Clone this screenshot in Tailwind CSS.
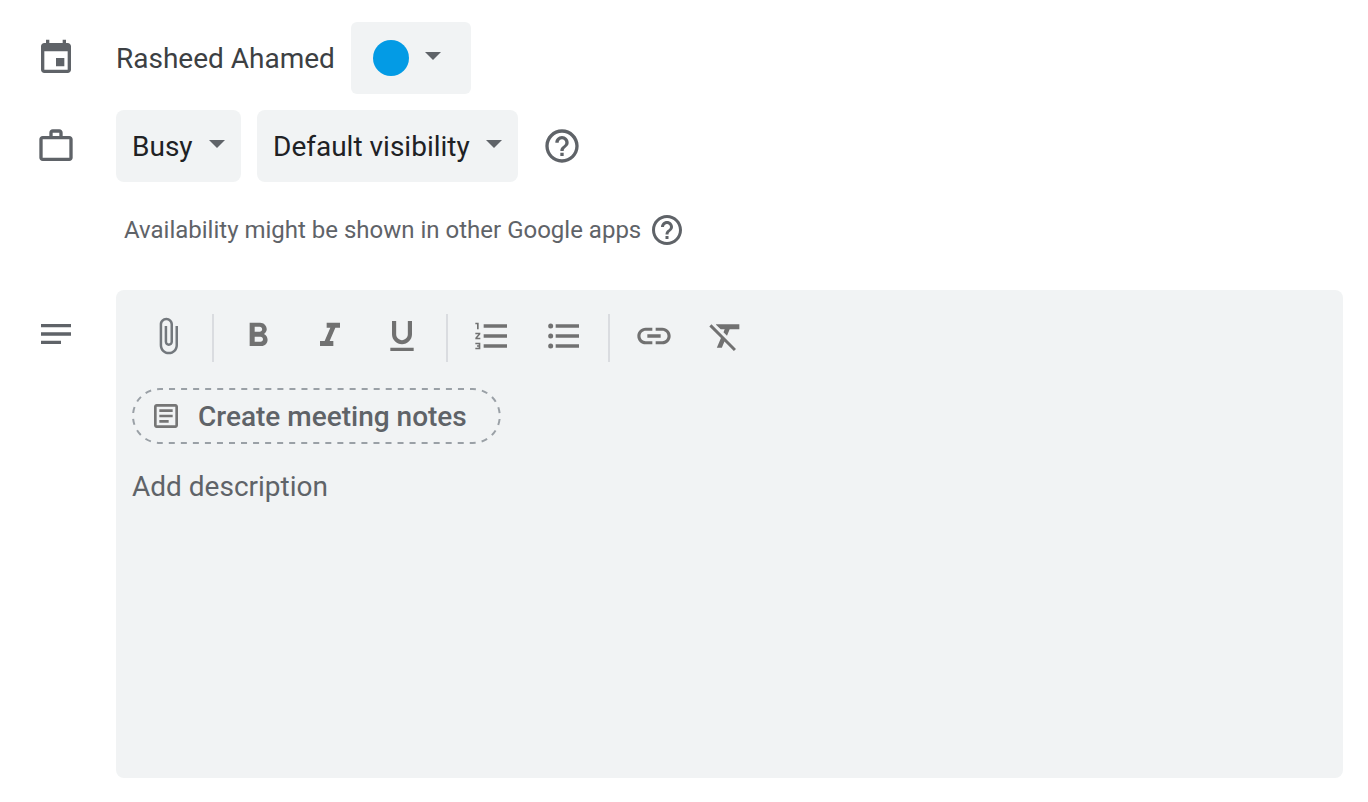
<!DOCTYPE html>
<html lang="en">
<head>
  <meta charset="UTF-8" />
  <meta name="viewport" content="width=device-width, initial-scale=1.0"/>
  <title>Event details</title>
  <script src="https://cdn.jsdelivr.net/npm/@tailwindcss/browser@4"></script>
</head>
<body class="bg-white font-['Roboto',sans-serif] text-[28px] leading-8 text-[#3c4043]">

  <main class="flex flex-col pt-[22px] pb-6 pl-9 pr-[25px]">

    <!-- Calendar owner and colour -->
    <div class="flex items-center gap-10">
      <svg class="size-10 shrink-0 fill-[#5f6368]" viewBox="0 0 24 24" aria-hidden="true"><path d="M17 12h-5v5h5v-5zM16 1v2H8V1H6v2H5c-1.11 0-1.99.9-1.99 2L3 19c0 1.1.89 2 2 2h14c1.1 0 2-.9 2-2V5c0-1.1-.9-2-2-2h-1V1h-2zm3 18H5V8h14v11z"/></svg>
      <div class="flex items-center gap-4">
        <span class="pt-0.5">Rasheed Ahamed</span>
        <button type="button" aria-label="Event color" class="flex h-[72px] w-[120px] items-center gap-4 rounded-md bg-[#f1f3f4] pl-[22px]">
          <span class="size-9 rounded-full bg-[#039be5]"></span>
          <svg class="mb-1 h-2 w-4 fill-[#5f6368]" viewBox="0 0 10 5" aria-hidden="true"><path d="M0 0l5 5 5-5z"/></svg>
        </button>
      </div>
    </div>

    <!-- Availability and visibility -->
    <div class="mt-4 flex items-center gap-10">
      <svg class="size-10 shrink-0 fill-[#5f6368]" viewBox="0 0 24 24" aria-hidden="true"><path d="M14 6V4h-4v2h4zM4 8v11h16V8H4zm16-2c1.11 0 2 .89 2 2v11c0 1.11-.89 2-2 2H4c-1.11 0-2-.89-2-2V8c0-1.11.89-2 2-2h4V4c0-1.11.89-2 2-2h4c1.11 0 2 .89 2 2v2h4z"/></svg>
      <div class="flex items-center gap-4 text-[#202124]">
        <div class="relative">
          <select aria-label="Show as" class="h-[72px] appearance-none rounded-lg bg-[#f1f3f4] pt-0.5 pl-4 pr-12">
            <option>Busy</option>
          </select>
          <svg class="pointer-events-none absolute right-4 top-[30px] h-2 w-4 fill-[#5f6368]" viewBox="0 0 10 5" aria-hidden="true"><path d="M0 0l5 5 5-5z"/></svg>
        </div>
        <div class="relative">
          <select aria-label="Visibility" class="h-[72px] appearance-none rounded-lg bg-[#f1f3f4] pt-0.5 pl-4 pr-12">
            <option>Default visibility</option>
          </select>
          <svg class="pointer-events-none absolute right-4 top-[30px] h-2 w-4 fill-[#5f6368]" viewBox="0 0 10 5" aria-hidden="true"><path d="M0 0l5 5 5-5z"/></svg>
        </div>
        <button type="button" aria-label="Help with visibility" class="ml-2">
          <svg class="size-10 fill-[#5f6368]" viewBox="0 0 24 24" aria-hidden="true"><path d="M11 18h2v-2h-2v2zm1-16C6.48 2 2 6.48 2 12s4.48 10 10 10 10-4.48 10-10S17.52 2 12 2zm0 18c-4.41 0-8-3.59-8-8s3.59-8 8-8 8 3.59 8 8-3.59 8-8 8zm0-14c-2.21 0-4 1.79-4 4h2c0-1.1.9-2 2-2s2 .9 2 2c0 2-3 1.75-3 5h2c0-2.25 3-2.5 3-5 0-2.21-1.79-4-4-4z"/></svg>
        </button>
      </div>
    </div>

    <div class="mt-[30px] ml-[88px] flex items-center gap-2 text-2xl text-[#5f6368]">
      <span>Availability might be shown in other Google apps</span>
      <button type="button" aria-label="Help with availability">
        <svg class="size-9 fill-[#5f6368]" viewBox="0 0 24 24" aria-hidden="true"><path d="M11 18h2v-2h-2v2zm1-16C6.48 2 2 6.48 2 12s4.48 10 10 10 10-4.48 10-10S17.52 2 12 2zm0 18c-4.41 0-8-3.59-8-8s3.59-8 8-8 8 3.59 8 8-3.59 8-8 8zm0-14c-2.21 0-4 1.79-4 4h2c0-1.1.9-2 2-2s2 .9 2 2c0 2-3 1.75-3 5h2c0-2.25 3-2.5 3-5 0-2.21-1.79-4-4-4z"/></svg>
      </button>
    </div>

    <!-- Description editor -->
    <div class="mt-[42px] flex items-start gap-10">
      <svg class="mt-6 size-10 shrink-0 fill-[#5f6368]" viewBox="0 0 24 24" aria-hidden="true"><path d="M3 16h12v2H3zM3 11h18v2H3zM3 6h18v2H3z"/></svg>

      <div class="flex flex-1 flex-col rounded-lg bg-[#f1f3f4] px-4 pt-2.5">
        <div role="toolbar" aria-label="Formatting" class="flex items-center fill-[#717171]">
          <button type="button" aria-label="Add attachment" class="flex h-[72px] w-[72px] items-center justify-center">
            <svg class="size-10 fill-[#73787d]" viewBox="0 0 24 24" aria-hidden="true"><path d="M16.5 6v11.5c0 2.21-1.79 4-4 4s-4-1.79-4-4V5c0-1.38 1.12-2.5 2.5-2.5s2.5 1.12 2.5 2.5v10.5c0 .55-.45 1-1 1s-1-.45-1-1V6H10v9.5c0 1.38 1.12 2.5 2.5 2.5s2.5-1.12 2.5-2.5V5c0-2.21-1.79-4-4-4S7 2.79 7 5v12.5c0 3.04 2.46 5.5 5.5 5.5s5.5-2.46 5.5-5.5V6h-1.5z"/></svg>
          </button>
          <span class="mx-2 mt-1 h-12 w-0.5 bg-[#dadce0]"></span>
          <button type="button" aria-label="Bold" class="flex h-[72px] w-[72px] items-center justify-center">
            <svg class="size-10" viewBox="0 0 24 24" aria-hidden="true"><path d="M15.6 10.79c.97-.67 1.65-1.77 1.65-2.79 0-2.26-1.75-4-4-4H7v14h7.04c2.09 0 3.71-1.7 3.71-3.79 0-1.52-.86-2.82-2.15-3.42zM10 6.5h3c.83 0 1.5.67 1.5 1.5s-.67 1.5-1.5 1.5h-3v-3zm3.5 9H10v-3h3.5c.83 0 1.5.67 1.5 1.5s-.67 1.5-1.5 1.5z"/></svg>
          </button>
          <button type="button" aria-label="Italic" class="flex h-[72px] w-[72px] items-center justify-center">
            <svg class="size-10" viewBox="0 0 24 24" aria-hidden="true"><path d="M10 4v3h2.21l-3.42 8H6v3h8v-3h-2.21l3.42-8H18V4z"/></svg>
          </button>
          <button type="button" aria-label="Underline" class="flex h-[72px] w-[72px] items-center justify-center">
            <svg class="size-10" viewBox="0 0 24 24" aria-hidden="true"><path d="M12 17c3.31 0 6-2.69 6-6V3h-2.5v8c0 1.93-1.57 3.5-3.5 3.5S8.5 12.93 8.5 11V3H6v8c0 3.31 2.69 6 6 6zm-7 2v2h14v-2H5z"/></svg>
          </button>
          <span class="mx-2 mt-1 h-12 w-0.5 bg-[#dadce0]"></span>
          <button type="button" aria-label="Numbered list" class="flex h-[72px] w-[72px] items-center justify-center">
            <svg class="size-10" viewBox="0 0 24 24" aria-hidden="true"><path d="M2 17h2v.5H3v1h1v.5H2v1h3v-4H2v1zm1-9h1V4H2v1h1v3zm-1 3h1.8L2 13.1v.9h3v-1H3.2L5 10.9V10H2v1zm5-6v2h14V5H7zm0 14h14v-2H7v2zm0-6h14v-2H7v2z"/></svg>
          </button>
          <button type="button" aria-label="Bulleted list" class="flex h-[72px] w-[72px] items-center justify-center">
            <svg class="size-10" viewBox="0 0 24 24" aria-hidden="true"><circle cx="4" cy="6" r="1.5"/><circle cx="4" cy="12" r="1.5"/><circle cx="4" cy="18" r="1.5"/><path d="M7 19h14v-2H7v2zm0-6h14v-2H7v2zm0-8v2h14V5H7z"/></svg>
          </button>
          <span class="mx-2 mt-1 h-12 w-0.5 bg-[#dadce0]"></span>
          <button type="button" aria-label="Insert link" class="flex h-[72px] w-[72px] items-center justify-center">
            <svg class="size-10" viewBox="0 0 24 24" aria-hidden="true"><path d="M3.9 12c0-1.71 1.39-3.1 3.1-3.1h4V7H7c-2.76 0-5 2.24-5 5s2.24 5 5 5h4v-1.9H7c-1.71 0-3.1-1.39-3.1-3.1zM8 13h8v-2H8v2zm9-6h-4v1.9h4c1.71 0 3.1 1.39 3.1 3.1s-1.39 3.1-3.1 3.1h-4V17h4c2.76 0 5-2.24 5-5s-2.24-5-5-5z"/></svg>
          </button>
          <button type="button" aria-label="Remove formatting" class="flex h-[72px] w-[72px] items-center justify-center">
            <svg class="size-10" viewBox="0 0 24 24" aria-hidden="true"><path d="M3.27 5L2 6.27l6.97 6.97L6.5 19h3l1.57-3.66L16.73 21 18 19.73 3.55 5.27 3.27 5zM6 5v.18L8.82 8h2.4l-.72 1.68 2.1 2.1L14.21 8H20V5H6z"/></svg>
          </button>
        </div>

        <button type="button" class="relative mt-4 flex h-14 items-center gap-4 self-start rounded-full pl-[18px] pr-[34px] font-medium text-[#5f6368]">
          <!-- dashed outline with even dashes and gaps -->
          <svg class="absolute inset-0 size-full overflow-visible p-px" aria-hidden="true"><rect width="100%" height="100%" rx="27" fill="none" stroke="#9aa0a6" stroke-width="2" pathLength="792" stroke-dasharray="6 6" stroke-dashoffset="3"/></svg>
          <svg class="size-8 fill-[#757575]" viewBox="0 0 24 24" aria-hidden="true"><path d="M19 5v14H5V5h14m0-2H5c-1.1 0-2 .9-2 2v14c0 1.1.9 2 2 2h14c1.1 0 2-.9 2-2V5c0-1.1-.9-2-2-2zM14 17H7v-2h7v2zm3-4H7v-2h10v2zm0-4H7V7h10v2z"/></svg>
          <span class="pt-0.5">Create meeting notes</span>
        </button>

        <textarea aria-label="Description" placeholder="Add description" class="mt-6 block h-[310px] w-full resize-none pt-[3px] outline-none placeholder:text-[#5f6368]"></textarea>
      </div>
    </div>

  </main>
</body>
</html>
